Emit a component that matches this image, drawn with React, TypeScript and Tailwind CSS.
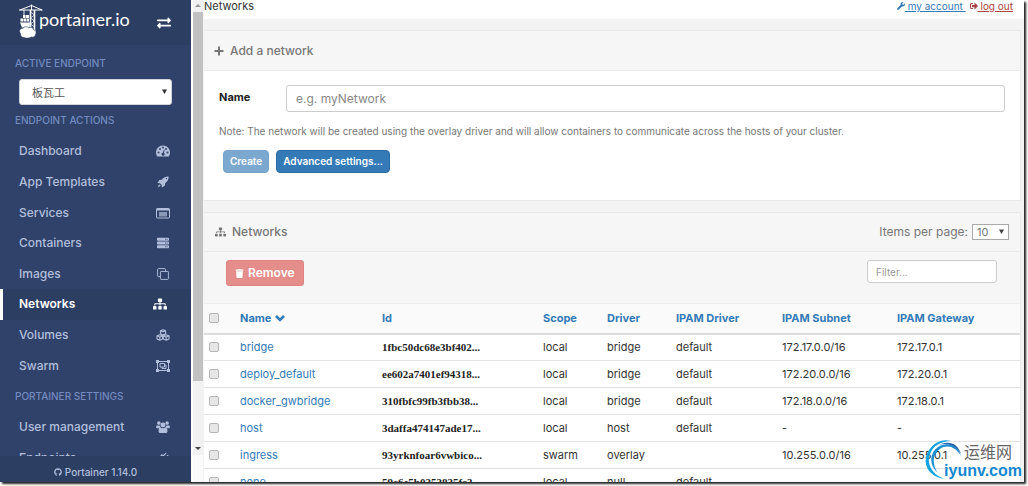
import React from 'react';
import { FaExchangeAlt, FaGithub, FaServer, FaSignOutAlt, FaSitemap, FaTrash, FaWrench } from 'react-icons/fa';

type Icon = React.ComponentType<{ className?: string }>;

interface MenuItem {
  label: string;
  icon: Icon;
  active?: boolean;
}

interface Network {
  name: string;
  id: string;
  scope: string;
  driver: string;
  ipamDriver: string;
  subnet: string;
  gateway: string;
}

const DashboardIcon: Icon = ({ className }) => (
  <svg viewBox="0 0 14 12" className={className} fill="currentColor" fillRule="evenodd" aria-hidden="true">
    <path d="M7 .5a7 7 0 0 0-5.900 10.700c.1.200.3.300.5.300h10.800c.2 0 .4-.1.500-.3A7 7 0 0 0 7 .5zM2.500 6.500a1 1 0 1 1 0 2 1 1 0 0 1 0-2zM4 3a1 1 0 1 1 0 2 1 1 0 0 1 0-2zM7 1.500a1 1 0 1 1 0 2 1 1 0 0 1 0-2zM10 3a1 1 0 1 1 0 2 1 1 0 0 1 0-2zM11.500 6.500a1 1 0 1 1 0 2 1 1 0 0 1 0-2zM7.800 4.700l.9.200-.8 3a1.500 1.500 0 1 1-.9-.2z" />
  </svg>
);

const RocketIcon: Icon = ({ className }) => (
  <svg viewBox="0 0 14 14" className={className} fill="currentColor" fillRule="evenodd" aria-hidden="true">
    <path d="M13.500.5c-3.500-.1-5.500 1-8 4L2.800 4.700.5 8.300l3 .2 2 2 .2 3 3.600-2.300.200-2.700c3-2.500 4.100-4.500 4-8zM11 2.200a.8.800 0 1 1 0 1.600.8.800 0 0 1 0-1.600zM2.800 9.800C1.600 10.300 1.300 12 1 13c1-.3 2.700-.6 3.200-1.800z" />
  </svg>
);

const ListAltIcon: Icon = ({ className }) => (
  <svg viewBox="0 0 14 12" className={className} fill="none" stroke="currentColor" aria-hidden="true">
    <rect x=".5" y="1.500" width="13" height="9.500" rx="1" />
    <path d="M.5 2.500h13" strokeWidth="2" />
    <path d="M3 5h8v4.500H3z" fill="currentColor" stroke="none" opacity=".7" />
  </svg>
);

const CloneIcon: Icon = ({ className }) => (
  <svg viewBox="0 0 14 14" className={className} fill="none" stroke="currentColor" strokeWidth="1.100" aria-hidden="true">
    <rect x="4" y="4" width="9.300" height="9.300" rx=".8" />
    <path d="M4 10H1.500a.8.800 0 0 1-.8-.8V1.500c0-.4.4-.8.800-.8h7.700c.4 0 .8.400.8.800V4" />
  </svg>
);

const CubesIcon: Icon = ({ className }) => (
  <svg viewBox="0 0 16 14" className={className} fill="none" stroke="currentColor" strokeWidth="1.300" strokeLinejoin="round" aria-hidden="true">
    <path d="M8 .8 11 2v3.500L8 7 5 5.500V2zM5 2l3 1.300L11 2" />
    <path d="M4.300 6.800 7.500 8v3.700L4.300 13 1 11.700V8zM1 8l3.300 1.400L7.500 8M4.300 9.400V13" />
    <path d="M11.700 6.800 15 8v3.700L11.700 13 8.500 11.700V8zM8.500 8l3.200 1.400L15 8M11.700 9.400V13" />
  </svg>
);

const ObjectGroupIcon: Icon = ({ className }) => (
  <svg viewBox="0 0 14 12" className={className} fill="none" stroke="currentColor" aria-hidden="true">
    <path d="M1.500 1.500h11v9h-11z" />
    <path d="M0 0h3v3H0zM11 0h3v3h-3zM0 9h3v3H0zM11 9h3v3h-3z" fill="currentColor" stroke="none" />
    <path d="M4 3.500h4.500V7H4zM8.500 5H10v3.500H6V7" />
  </svg>
);

const UsersIcon: Icon = ({ className }) => (
  <svg viewBox="0 0 15 13" className={className} fill="currentColor" aria-hidden="true">
    <circle cx="3" cy="2.300" r="1.900" />
    <circle cx="12" cy="2.300" r="1.900" />
    <circle cx="7.500" cy="4.200" r="2.700" />
    <path d="M1.500 4.500C.4 4.500 0 5.700 0 7c0 .5.500.8 1 .8h2.300c.4-.5 1-.8 1.700-1-.6-.7-.8-1.400-.7-2-.9.400-1.900.300-2.800-.3zM13.500 4.500c1.100 0 1.500 1.200 1.500 2.500 0 .5-.5.800-1 .8h-2.300c-.4-.5-1-.8-1.700-1 .6-.7.800-1.400.7-2 .9.400 1.900.300 2.800-.3zM5 7c-1.700 0-2.300 1.700-2.300 4 0 1.200.8 2 1.800 2h6c1 0 1.800-.8 1.800-2 0-2.300-.6-4-2.300-4-1.500 1.200-3.500 1.200-5 0z" />
  </svg>
);

const PlugIcon: Icon = ({ className }) => (
  <svg viewBox="0 0 14 14" className={className} fill="currentColor" aria-hidden="true">
    <path d="m13.500 4-3 3L12 8.500c-2 2-4.500 2.500-6.500 1.300L2 13.500l-1-1L4.200 8.700C3 6.500 3.500 4.500 5.500 2.300L7 3.800l3-3 1 1-3 3 1.500 1.500 3-3z" />
  </svg>
);

const PlusIcon: Icon = ({ className }) => (
  <svg viewBox="0 0 10 10" className={className} fill="currentColor" aria-hidden="true">
    <path d="M4 .5h2V4h3.500v2H6v3.500H4V6H.5V4H4z" />
  </svg>
);

const ChevronDownIcon: Icon = ({ className }) => (
  <svg viewBox="0 0 10 8" className={className} fill="none" stroke="currentColor" strokeWidth="2.600" aria-hidden="true">
    <path d="m1 2 4 4 4-4" />
  </svg>
);

const CaretIcon: Icon = ({ className }) => (
  <svg viewBox="0 0 6 6" className={className} fill="currentColor" aria-hidden="true">
    <path d="M0 .5h6L3 6z" />
  </svg>
);

const endpointItems: MenuItem[] = [
  { label: 'Dashboard', icon: DashboardIcon },
  { label: 'App Templates', icon: RocketIcon },
  { label: 'Services', icon: ListAltIcon },
  { label: 'Containers', icon: FaServer },
  { label: 'Images', icon: CloneIcon },
  { label: 'Networks', icon: FaSitemap, active: true },
  { label: 'Volumes', icon: CubesIcon },
  { label: 'Swarm', icon: ObjectGroupIcon },
];

const settingsItems: MenuItem[] = [
  { label: 'User management', icon: UsersIcon },
  { label: 'Endpoints', icon: PlugIcon },
];

const networks: Network[] = [
  { name: 'bridge', id: '1fbc50dc68e3bf402...', scope: 'local', driver: 'bridge', ipamDriver: 'default', subnet: '172.17.0.0/16', gateway: '172.17.0.1' },
  { name: 'deploy_default', id: 'ee602a7401ef94318...', scope: 'local', driver: 'bridge', ipamDriver: 'default', subnet: '172.20.0.0/16', gateway: '172.20.0.1' },
  { name: 'docker_gwbridge', id: '310fbfc99fb3fbb38...', scope: 'local', driver: 'bridge', ipamDriver: 'default', subnet: '172.18.0.0/16', gateway: '172.18.0.1' },
  { name: 'host', id: '3daffa474147ade17...', scope: 'local', driver: 'host', ipamDriver: 'default', subnet: '-', gateway: '-' },
  { name: 'ingress', id: '93yrknfoar6vwbico...', scope: 'swarm', driver: 'overlay', ipamDriver: '', subnet: '10.255.0.0/16', gateway: '10.255.0.1' },
  { name: 'none', id: '59c6e5b0353835fc3...', scope: 'local', driver: 'null', ipamDriver: 'default', subnet: '-', gateway: '-' },
];

const columns = [
  { label: 'Name', width: 'w-[142px]' },
  { label: 'Id', width: 'w-[161px]' },
  { label: 'Scope', width: 'w-16' },
  { label: 'Driver', width: 'w-[69px]' },
  { label: 'IPAM Driver', width: 'w-[106px]' },
  { label: 'IPAM Subnet', width: 'w-[115px]' },
  { label: 'IPAM Gateway', width: '' },
];

const CraneLogo: React.FC = () => (
  <svg viewBox="0 0 24 34" className="h-[34px] w-6" fill="none" stroke="#fff" aria-hidden="true">
    <path d="M0 6h23.500M1 6l11.500-4.500L23 6M12.500.5V6" strokeWidth="1" />
    <path d="M11.500 6v20M15.500 6v24" strokeWidth="1.600" />
    <path d="m11.500 8 4 3-4 3 4 3-4 3 4 3" strokeWidth=".7" />
    <path d="M5 6v5" strokeWidth=".9" />
    <path d="M4 11h2.500v3H4zM7 11h3v3H7zM1.500 14.500H4v3H1.500zM4.500 14.500h2.500v3H4.500zM7.500 14.500H10v3H7.500z" fill="#fff" stroke="none" />
    <path d="M1 18.500h10l-.5 5H3z" fill="#fff" stroke="none" />
    <path d="M5 33.500c-2.500 0-4-2-3.500-4C-.5 27 1 24 4 24.300c1.500-2 4.500-2 5.500-.5 2-1.300 5 0 5.200 2 2.500.5 3 3 1.800 4.700-.3 2.500-2.500 3-4 2.500-2 1.300-5.500 1.500-7.500.5z" fill="#fff" stroke="#2d3e63" strokeWidth=".6" />
  </svg>
);

const Watermark: React.FC = () => (
  <div className="pointer-events-none absolute right-0 bottom-0 flex h-[42px] w-[100px] justify-end">
    <svg viewBox="0 0 44 42" className="absolute top-0 left-0 h-[42px] w-11" aria-hidden="true">
      <path d="M21 39C7 38-2 26 3 14 7 4 17-2 27 1 17 1 9 6 6 14 2 25 9 35 21 39z" fill="#12a4e2" />
      <path d="M14 33C5 26 5 13 14 7c9-6 20-2 23 9C32 7 23 4 16 9 8 14 8 25 14 33z" fill="#1b8fd4" />
      <path d="M15 5c9-5 19-2 22 9C32 6 24 2 15 5z" fill="#2463aa" />
    </svg>
    <div className="relative flex flex-col items-end pr-0.5">
      <span className="mr-2.5 font-['Noto_Sans_CJK_SC',sans-serif] text-[16px] leading-[22px] text-[#666]">运维网</span>
      <span className="font-['Liberation_Sans',sans-serif] text-[16px] leading-[18px] font-bold text-[#1588d1]">iyunv.com</span>
    </div>
  </div>
);

const MenuRow: React.FC<{ item: MenuItem }> = ({ item }) => {
  const ItemIcon = item.icon;
  return (
    <li className="flex">
      <a
        href="#"
        className={`flex flex-1 items-center justify-between border-l-[3px] pl-4 ${
          item.active ? 'border-white bg-[#2d3e63] pr-6 font-semibold text-white' : 'border-transparent pr-[21px] text-[#b2bfdc]'
        }`}
      >
        {item.label}
        <ItemIcon className="h-3 w-[14px]" />
      </a>
    </li>
  );
};

const Sidebar: React.FC = () => (
  <aside className="flex w-[191px] shrink-0 flex-col overflow-hidden bg-[#30426a] text-[12px] font-medium">
    <header className="flex h-[45px] shrink-0 items-center justify-between bg-[#2d3e63] pr-5 pl-[19px] text-white">
      <a href="#" className="flex items-center pb-1">
        <CraneLogo />
        <span className="-ml-1 pb-1 font-['Lato',sans-serif] text-[18px] leading-5 font-normal">portainer.io</span>
      </a>
      <button type="button" aria-label="Toggle sidebar">
        <FaExchangeAlt className="size-[14px]" />
      </button>
    </header>
    <nav className="min-h-0 flex-1 overflow-hidden">
      <label htmlFor="endpoint" className="block pt-2 pl-[15px] text-[10px] leading-5 text-[#738bc0]">
        ACTIVE ENDPOINT
      </label>
      <div className="relative mt-1.5 mr-[19px] ml-[19px]">
        <select
          id="endpoint"
          className="h-[26px] w-full appearance-none rounded-[3px] border border-gray-300 bg-white pl-3 font-['Noto_Sans_CJK_SC',sans-serif] text-[11px] font-normal text-[#555]"
        >
          <option>板瓦工</option>
        </select>
        <CaretIcon className="pointer-events-none absolute top-[10px] right-[5px] size-[5px] text-[#333]" />
      </div>
      <h2 className="pt-1.5 pl-[15px] text-[10px] leading-[18px] text-[#738bc0]">ENDPOINT ACTIONS</h2>
      <ul className="mt-[7px] grid h-[245px] auto-rows-fr">
        {endpointItems.map((item) => (
          <MenuRow key={item.label} item={item} />
        ))}
      </ul>
      <h2 className="h-[30px] pl-[15px] text-[10px] leading-[30px] text-[#738bc0]">PORTAINER SETTINGS</h2>
      <ul className="grid auto-rows-[31px]">
        {settingsItems.map((item) => (
          <MenuRow key={item.label} item={item} />
        ))}
      </ul>
    </nav>
    <footer className="flex h-[26px] shrink-0 items-center justify-center gap-[3px] bg-[#2d3e63] pt-1.5 text-[10px] text-[#b2bfdc]">
      <FaGithub className="size-2" />
      Portainer 1.14.0
    </footer>
  </aside>
);

const ScrollTrack: React.FC = () => (
  <div className="ml-0.5 flex w-[10px] shrink-0 flex-col items-center bg-[#f1f1f1]" aria-hidden="true">
    <svg viewBox="0 0 10 12" className="h-3 w-[10px] shrink-0">
      <path d="M2 7h6L5 4z" fill="#9a9a9a" />
    </svg>
    <div className="w-full flex-[369] bg-[#c1c1c1]" />
    <div className="flex-[62]" />
    <svg viewBox="0 0 10 12" className="h-3 w-[10px] shrink-0">
      <path d="M2 4h6L5 7z" fill="#404040" />
    </svg>
    <div className="h-[27px] w-full bg-[#fafafa]" />
  </div>
);

const App: React.FC = () => {
  return (
    <div className="h-screen overflow-hidden bg-white pr-1 pb-1 font-['Inter',sans-serif] text-[11px] text-[#333]">
      <div className="relative flex h-full overflow-hidden bg-white shadow-[2px_2px_2px_#222]">
        <Sidebar />
        <ScrollTrack />
        <main className="flex min-w-0 flex-1 flex-col bg-[#f3f3f3] pl-px">
          <header className="flex h-[19px] shrink-0 items-start justify-between bg-white pr-[11px] leading-3">
            <h1>Networks</h1>
            <div className="flex gap-1 text-[10px]">
              <a href="#" className="flex items-center text-[#337ab7] underline">
                <FaWrench className="size-2" />
                <span className="whitespace-pre"> my account </span>
              </a>
              <a href="#" className="flex items-center text-[#a94442] underline">
                <FaSignOutAlt className="size-2" />
                <span className="whitespace-pre"> log out</span>
              </a>
            </div>
          </header>

          <section className="mt-[11px] mr-[3px] shrink-0 border border-l-0 border-[#e9e9e9] bg-white">
            <div className="flex h-10 items-center gap-1.5 border-b border-[#e9e9e9] bg-[#f6f6f6] pl-[10px] text-[#767676]">
              <PlusIcon className="size-[10px]" />
              <h2 className="text-[12px] font-medium">Add a network</h2>
            </div>
            <form className="px-[15px] pt-[14px] pb-[27px]">
              <div className="flex items-center">
                <label htmlFor="name" className="w-[67px] pb-0.5 font-bold text-[#222]">
                  Name
                </label>
                <input
                  id="name"
                  type="text"
                  placeholder="e.g. myNetwork"
                  className="h-[27px] min-w-0 flex-1 rounded-[3px] border border-[#ccc] px-[9px] text-[12px] placeholder:text-[#888]"
                />
              </div>
              <p className="mt-[11px] text-[10px] leading-4 text-[#777]">
                Note: The network will be created using the overlay driver and will allow containers to communicate across the hosts of your cluster.
              </p>
              <div className="mt-[11px] ml-1 flex gap-[7px] text-[10px] font-semibold text-white">
                <button type="button" disabled className="h-[23px] rounded-sm border border-[#76a4cc] bg-[#7ba8cf] px-1.5">
                  Create
                </button>
                <button type="button" className="h-[23px] rounded-sm border border-[#2e6da4] bg-[#337ab7] px-1.5">
                  Advanced settings...
                </button>
              </div>
            </form>
          </section>

          <section className="mt-[11px] mr-[3px] shrink-0 border border-l-0 border-[#e9e9e9] bg-white">
            <div className="flex h-[39px] items-center border-b border-[#e9e9e9] bg-[#f6f6f6] pr-[11px] pl-[11px] text-[12px] text-[#767676]">
              <FaSitemap className="h-[10px] w-[11px]" />
              <h2 className="ml-1.5 flex-1 font-medium">Networks</h2>
              <label htmlFor="per-page">Items per page:</label>
              <div className="relative ml-1">
                <select
                  id="per-page"
                  className="block h-4 w-[37px] appearance-none border border-[#a9a9a9] bg-white pl-1 text-[11px] leading-3"
                >
                  <option>10</option>
                </select>
                <CaretIcon className="pointer-events-none absolute top-[5px] right-[5px] size-[5px] text-[#444]" />
              </div>
            </div>
            <div className="flex h-[51px] items-start justify-between bg-[#f6f6f6] pt-2 pr-[23px] pl-[22px]">
              <button
                type="button"
                disabled
                className="flex h-[26px] items-center gap-1 rounded-[3px] border border-[#e08380] bg-[#e48d8a] px-2 text-[12px] font-semibold text-white"
              >
                <FaTrash className="size-[9px]" />
                Remove
              </button>
              <input
                type="text"
                aria-label="Filter"
                placeholder="Filter..."
                className="h-[23px] w-[130px] rounded-[3px] border border-[#ccc] bg-white px-2 text-[10px] placeholder:text-[#999]"
              />
            </div>
            <table className="w-full table-fixed text-left">
              <thead className="bg-[#fafafa] text-[#337ab7]">
                <tr className="h-[30px] border-t border-b-2 border-t-[#eee] border-b-[#ddd]">
                  <th className="w-[31px] pl-[5px]">
                    <input type="checkbox" aria-label="Select all" className="block size-[10px] appearance-none rounded-xs border border-[#b5b5b5] bg-[#e6e6e6]" />
                  </th>
                  {columns.map((column) => (
                    <th key={column.label} className={`pl-[5px] font-bold whitespace-nowrap ${column.width}`}>
                      <a href="#" className="inline-flex items-center gap-1">
                        {column.label}
                        {column.label === 'Name' && <ChevronDownIcon className="h-2 w-[10px]" />}
                      </a>
                    </th>
                  ))}
                </tr>
              </thead>
              <tbody>
                {networks.map((network) => (
                  <tr key={network.name} className="h-[27px] border-b border-[#e3e3e3] leading-4">
                    <td className="pl-[5px]">
                      <input
                        type="checkbox"
                        aria-label={`Select ${network.name}`}
                        className="block size-[10px] appearance-none rounded-xs border border-[#b5b5b5] bg-[#e6e6e6]"
                      />
                    </td>
                    <td className="pl-[5px]">
                      <a href="#" className="text-[#337ab7]">
                        {network.name}
                      </a>
                    </td>
                    <td className="pl-[5px] font-['Liberation_Serif',serif] font-bold text-[#222]">{network.id}</td>
                    <td className="pl-[5px]">{network.scope}</td>
                    <td className="pl-[5px]">{network.driver}</td>
                    <td className="pl-[5px]">{network.ipamDriver}</td>
                    <td className="pl-[5px]">{network.subnet}</td>
                    <td className="pl-[5px]">{network.gateway}</td>
                  </tr>
                ))}
              </tbody>
            </table>
          </section>
        </main>
        <Watermark />
      </div>
    </div>
  );
};

export default App;
